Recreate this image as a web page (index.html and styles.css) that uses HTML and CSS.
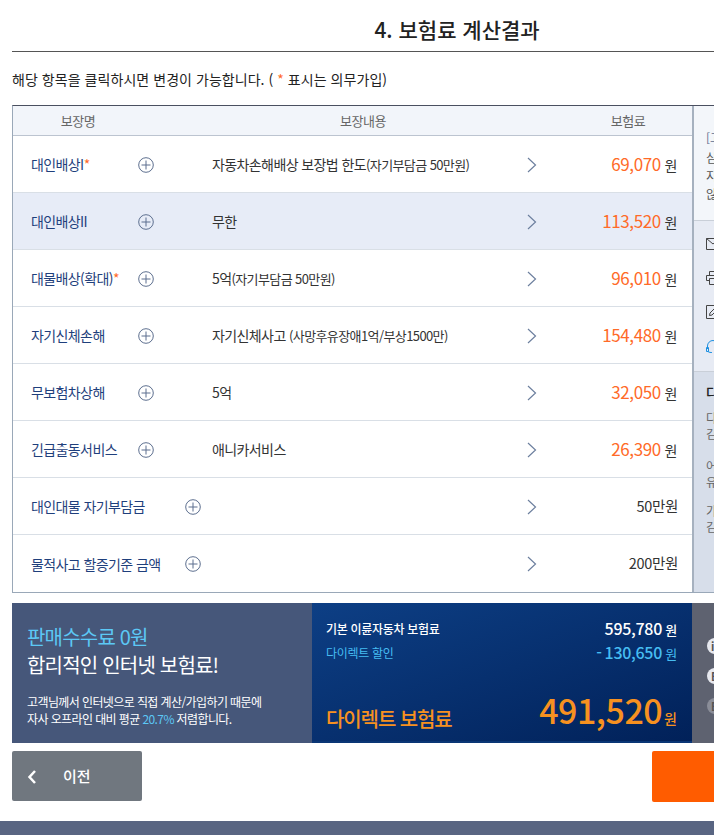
FILE: index.html
```html
<!DOCTYPE html>
<html lang="ko">
<head>
    <meta charset="UTF-8">
    <meta name="viewport" content="width=device-width, initial-scale=1.0">
    <title>보험료 계산결과</title>
    <link rel="stylesheet" href="styles.css">
</head>
<body>
    <div class="page">
        <h2 class="page-title">4. 보험료 계산결과</h2>
        <p class="notice">해당 항목을 클릭하시면 변경이 가능합니다. ( <span class="star">*</span> 표시는 의무가입)</p>

        <div class="result-box">
            <div class="coverage">
                <div class="coverage-head">
                    <span>보장명</span>
                    <span>보장내용</span>
                    <span>보험료</span>
                </div>

                <div class="row">
                    <div class="name"><span class="label">대인배상I<span class="star">*</span></span><svg class="plus"><use href="#i-plus"/></svg></div>
                    <div class="detail">자동차손해배상 보장법 한도<small>(자기부담금 50만원)</small></div>
                    <svg class="arrow"><use href="#i-arrow"/></svg>
                    <div class="price"><b>69,070</b> 원</div>
                </div>
                <div class="row active">
                    <div class="name"><span class="label">대인배상II</span><svg class="plus"><use href="#i-plus"/></svg></div>
                    <div class="detail">무한</div>
                    <svg class="arrow"><use href="#i-arrow"/></svg>
                    <div class="price"><b>113,520</b> 원</div>
                </div>
                <div class="row">
                    <div class="name"><span class="label">대물배상(확대)<span class="star">*</span></span><svg class="plus"><use href="#i-plus"/></svg></div>
                    <div class="detail">5억<small>(자기부담금 50만원)</small></div>
                    <svg class="arrow"><use href="#i-arrow"/></svg>
                    <div class="price"><b>96,010</b> 원</div>
                </div>
                <div class="row">
                    <div class="name"><span class="label">자기신체손해</span><svg class="plus"><use href="#i-plus"/></svg></div>
                    <div class="detail">자기신체사고 <small>(사망후유장애1억/부상1500만)</small></div>
                    <svg class="arrow"><use href="#i-arrow"/></svg>
                    <div class="price"><b>154,480</b> 원</div>
                </div>
                <div class="row">
                    <div class="name"><span class="label">무보험차상해</span><svg class="plus"><use href="#i-plus"/></svg></div>
                    <div class="detail">5억</div>
                    <svg class="arrow"><use href="#i-arrow"/></svg>
                    <div class="price"><b>32,050</b> 원</div>
                </div>
                <div class="row">
                    <div class="name"><span class="label">긴급출동서비스</span><svg class="plus"><use href="#i-plus"/></svg></div>
                    <div class="detail">애니카서비스</div>
                    <svg class="arrow"><use href="#i-arrow"/></svg>
                    <div class="price"><b>26,390</b> 원</div>
                </div>
                <div class="row wide">
                    <div class="name"><span class="label">대인대물 자기부담금</span><svg class="plus"><use href="#i-plus"/></svg></div>
                    <div class="detail"></div>
                    <svg class="arrow"><use href="#i-arrow"/></svg>
                    <div class="price plain">50만원</div>
                </div>
                <div class="row wide last">
                    <div class="name"><span class="label">물적사고 할증기준 금액</span><svg class="plus"><use href="#i-plus"/></svg></div>
                    <div class="detail"></div>
                    <svg class="arrow"><use href="#i-arrow"/></svg>
                    <div class="price plain">200만원</div>
                </div>
            </div>

            <div class="side">
                <div class="side-info">
                    <p class="side-tag">[고객안내]</p>
                    <p>심사 결과에 따라</p>
                    <p>지역 및 차량별로</p>
                    <p>않을 수 있습니다</p>
                </div>
                <div class="side-links">
                    <svg class="side-icon" viewBox="0 0 14 12"><path d="M.5.5h13v11H.5zM.5.5 7 6l6.5-5.5"/></svg>
                    <svg class="side-icon" viewBox="0 0 14 14"><path d="M3.5 9.5h-3v-5h13v5h-3M3.5 4.500v-4h7v4M3.500 7.500h7v6h-7z"/></svg>
                    <svg class="side-icon" viewBox="0 0 14 14"><path d="M13.500 13.500H.5V.5h13M3.500 10.500 4 8l6-6 2 2-6 6z"/></svg>
                    <svg class="side-icon blue" viewBox="0 0 14 14"><path d="M1.500 10V7a5.500 5.500 0 0 1 11 0v3M.5 8.500h2v4h-2zM2 12.500c1 1 3 1 4 1"/></svg>
                </div>
                <div class="side-notes">
                    <h3>다이렉트</h3>
                    <p>다이렉트 보험</p>
                    <p class="gap">김포 사무소</p>
                    <p>어린이 특약</p>
                    <p class="gap-sm">유자녀 할인</p>
                    <p>가족 한정</p>
                    <p>김해 지점</p>
                </div>
            </div>
        </div>

        <div class="summary">
            <div class="summary-left">
                <p class="promo-1">판매수수료 0원</p>
                <p class="promo-2">합리적인 인터넷 보험료!</p>
                <p class="promo-3">고객님께서 인터넷으로 직접 계산/가입하기 때문에<br>자사 오프라인 대비 평균 <em>20.7%</em> 저렴합니다.</p>
            </div>
            <div class="summary-mid">
                <div class="sum-row">
                    <span>기본 이륜자동차 보험료</span>
                    <span class="sum-num"><b>595,780</b> 원</span>
                </div>
                <div class="sum-row sky">
                    <span>다이렉트 할인</span>
                    <span class="sum-num"><b>-&thinsp;130,650</b> 원</span>
                </div>
                <div class="sum-total">
                    <span class="total-label">다이렉트 보험료</span>
                    <span class="total-num"><b>491,520</b> 원</span>
                </div>
            </div>
            <div class="summary-right">
                <span class="dot">i</span>
                <span class="dot">E</span>
                <span class="dot dim">E</span>
            </div>
        </div>

        <div class="buttons">
            <a class="btn-prev"><svg class="prev-arrow" viewBox="0 0 10 16"><path d="M8 2 2.500 8 8 14"/></svg><span class="prev-text">이전</span></a>
            <a class="btn-next"></a>
        </div>
    </div>
    <div class="footer"></div>

    <svg class="defs">
        <symbol id="i-plus" viewBox="0 0 16 16">
            <circle cx="8" cy="8" r="7.300"/>
            <path d="M8 3.500v9M3.500 8h9"/>
        </symbol>
        <symbol id="i-arrow" viewBox="0 0 10 16">
            <path d="M1 1l7.500 7L1 15"/>
        </symbol>
    </svg>
</body>
</html>
```

FILE: styles.css
```css
html, body {
    margin: 0;
    height: 100%;
    overflow: hidden;
}

body {
    font-family: "Noto Sans CJK KR", "Noto Sans", sans-serif;
    color: #333;
    background-color: #fff;
}

p, h2, h3 {
    margin: 0;
}

.page {
    width: 890px;
    margin-left: 12px;
}

.page-title {
    height: 51px;
    line-height: 58px;
    border-bottom: 1px solid #555;
    box-sizing: content-box;
    text-align: center;
    font-size: 21px;
    font-weight: 500;
    color: #222;
}

.notice {
    margin-top: 17px;
    margin-bottom: 16px;
    line-height: 20px;
    font-size: 14px;
    letter-spacing: 0.05px;
    color: #222;
}

.star {
    color: #ff6a28;
}

.result-box {
    display: flex;
    border-top: 1px solid #4a5060;
    border-bottom: 1px solid #9aa8b8;
    border-left: 1px solid #9aa8b8;
}

.coverage {
    width: 679px;
    flex: none;
}

.coverage-head {
    display: grid;
    grid-template-columns: 130px 440px 90px;
    height: 29px;
    line-height: 29px;
    border-bottom: 1px solid #bcc4d0;
    background-color: #f2f5fa;
    text-align: center;
    font-size: 13px;
    letter-spacing: -0.5px;
    color: #666;
}

.row {
    display: grid;
    grid-template-columns: 181px 315px 12px 1fr;
    align-items: center;
    height: 56px;
    padding: 0 15px 0 18px;
    border-bottom: 1px solid #d9dfe6;
}

.row.last {
    height: 57px;
    border-bottom: none;
}

.row.active {
    background-color: #e7ecf7;
}

.name {
    display: flex;
    align-items: center;
}

.label {
    width: 107px;
    flex: none;
    font-size: 14px;
    letter-spacing: -0.6px;
    color: #1f3f7c;
    white-space: nowrap;
}

.wide .label {
    width: 154px;
}

.plus {
    width: 16px;
    height: 16px;
    margin-top: 1px;
    fill: none;
    stroke: #5d6f8f;
    stroke-width: 1;
}

.detail {
    font-size: 14px;
    letter-spacing: -0.6px;
    color: #333;
    white-space: nowrap;
}

.detail small {
    font-size: 13px;
}

.arrow {
    width: 10px;
    height: 16px;
    margin-top: 1px;
    fill: none;
    stroke: #6c7f9e;
    stroke-width: 1.200;
}

.price {
    margin-bottom: 2px;
    text-align: right;
    font-size: 14px;
    letter-spacing: -0.3px;
    white-space: nowrap;
}

.price b {
    font-size: 17px;
    font-weight: 400;
    letter-spacing: -0.4px;
    color: #ff6a28;
}

.price.plain {
    margin-right: -1px;
    font-size: 14.500px;
}

.side {
    width: 208px;
    flex: none;
    border-left: 2px solid #a6b1bf;
    font-size: 12px;
    white-space: nowrap;
}

.side-info {
    height: 114px;
    box-sizing: content-box;
    padding-left: 12px;
    border-bottom: 1px solid #c9cfd8;
    background-color: #f3f6fa;
    line-height: 18px;
    color: #555;
}

.side-tag {
    padding-top: 23px;
    padding-bottom: 2px;
    color: #5d6f8f;
}

.side-links {
    display: flex;
    flex-direction: column;
    gap: 20px;
    height: 150px;
    box-sizing: border-box;
    padding: 16px 0 0 12px;
    background-color: #e7ebf4;
}

.side-icon {
    width: 14px;
    height: 14px;
    fill: none;
    stroke: #444;
    stroke-width: 1;
}

.side-icon.blue {
    stroke: #1c8fe0;
}

.side-notes {
    height: 221px;
    box-sizing: border-box;
    padding: 10px 0 0 12px;
    border-top: 1px solid #c9cfd8;
    background-color: #d7deea;
    line-height: 16px;
    color: #666;
}

.side-notes h3 {
    margin-bottom: 8px;
    line-height: 20px;
    font-size: 14px;
    font-weight: 500;
    color: #222;
}

.side-notes .gap {
    margin-bottom: 16px;
}

.side-notes .gap-sm {
    margin-bottom: 13px;
}

.summary {
    display: flex;
    height: 140px;
    margin-top: 10px;
    color: #fff;
}

.summary-left {
    width: 300px;
    box-sizing: border-box;
    padding: 20px 15px 0;
    background-color: #46577a;
}

.promo-1, .promo-2 {
    line-height: 28px;
    font-size: 20px;
    font-weight: 400;
    letter-spacing: -0.8px;
}

.promo-1 {
    color: #5cc8f5;
}

.promo-3 {
    margin-top: 14px;
    line-height: 17px;
    font-size: 12px;
    letter-spacing: -0.6px;
}

.promo-3 em {
    font-style: normal;
    color: #5cc8f5;
}

.summary-mid {
    width: 380px;
    box-sizing: border-box;
    padding: 13px 15px 0 14px;
    border-bottom: 2px solid #0a3675;
    background: linear-gradient(160deg, #0d3f85, #012159);
}

.sum-row {
    display: flex;
    justify-content: space-between;
    align-items: center;
    height: 24px;
    font-size: 12px;
    letter-spacing: -0.3px;
    font-weight: 500;
}

.sum-row.sky {
    color: #46bdf2;
    font-weight: 400;
}

.sum-num {
    font-size: 13px;
}

.sum-num b {
    font-size: 16px;
    font-weight: 500;
}

.sum-total {
    display: flex;
    justify-content: space-between;
    align-items: flex-end;
    margin-top: 27px;
    color: #f79120;
}

.total-label {
    font-size: 20px;
    font-weight: 500;
    letter-spacing: -1.100px;
    line-height: 30px;
}

.total-num {
    margin-bottom: -3px;
    font-size: 14px;
    font-weight: 500;
    line-height: 38px;
    word-spacing: -2px;
}

.total-num b {
    font-size: 34px;
    font-weight: 500;
    letter-spacing: -0.5px;
}

.summary-right {
    display: flex;
    flex-direction: column;
    gap: 14px;
    width: 210px;
    box-sizing: border-box;
    padding: 35px 0 0 15px;
    background-color: #5e6270;
}

.dot {
    width: 16px;
    height: 16px;
    box-sizing: border-box;
    padding-left: 4px;
    border-radius: 50%;
    background-color: #e6e8ef;
    line-height: 16px;
    font-size: 11px;
    font-weight: 700;
    color: #555;
}

.dot.dim {
    background-color: #8a8d98;
}

.buttons {
    display: flex;
    justify-content: space-between;
    margin-top: 8px;
}

.btn-prev {
    display: flex;
    align-items: center;
    width: 130px;
    height: 50px;
    box-sizing: border-box;
    padding-left: 15px;
    border-radius: 2px;
    background-color: #70777f;
    font-size: 15px;
    font-weight: 500;
    color: #fff;
}

.prev-arrow {
    width: 10px;
    height: 16px;
    margin-top: 2px;
    margin-right: 26px;
    fill: none;
    stroke: #fff;
    stroke-width: 2.500;
}

.prev-text {
    margin-bottom: 2px;
}

.btn-next {
    width: 250px;
    height: 51px;
    border-radius: 2px;
    background-color: #ff5c00;
}

.footer {
    height: 200px;
    margin-top: 19px;
    background-color: #596582;
}

.defs {
    display: none;
}
```
